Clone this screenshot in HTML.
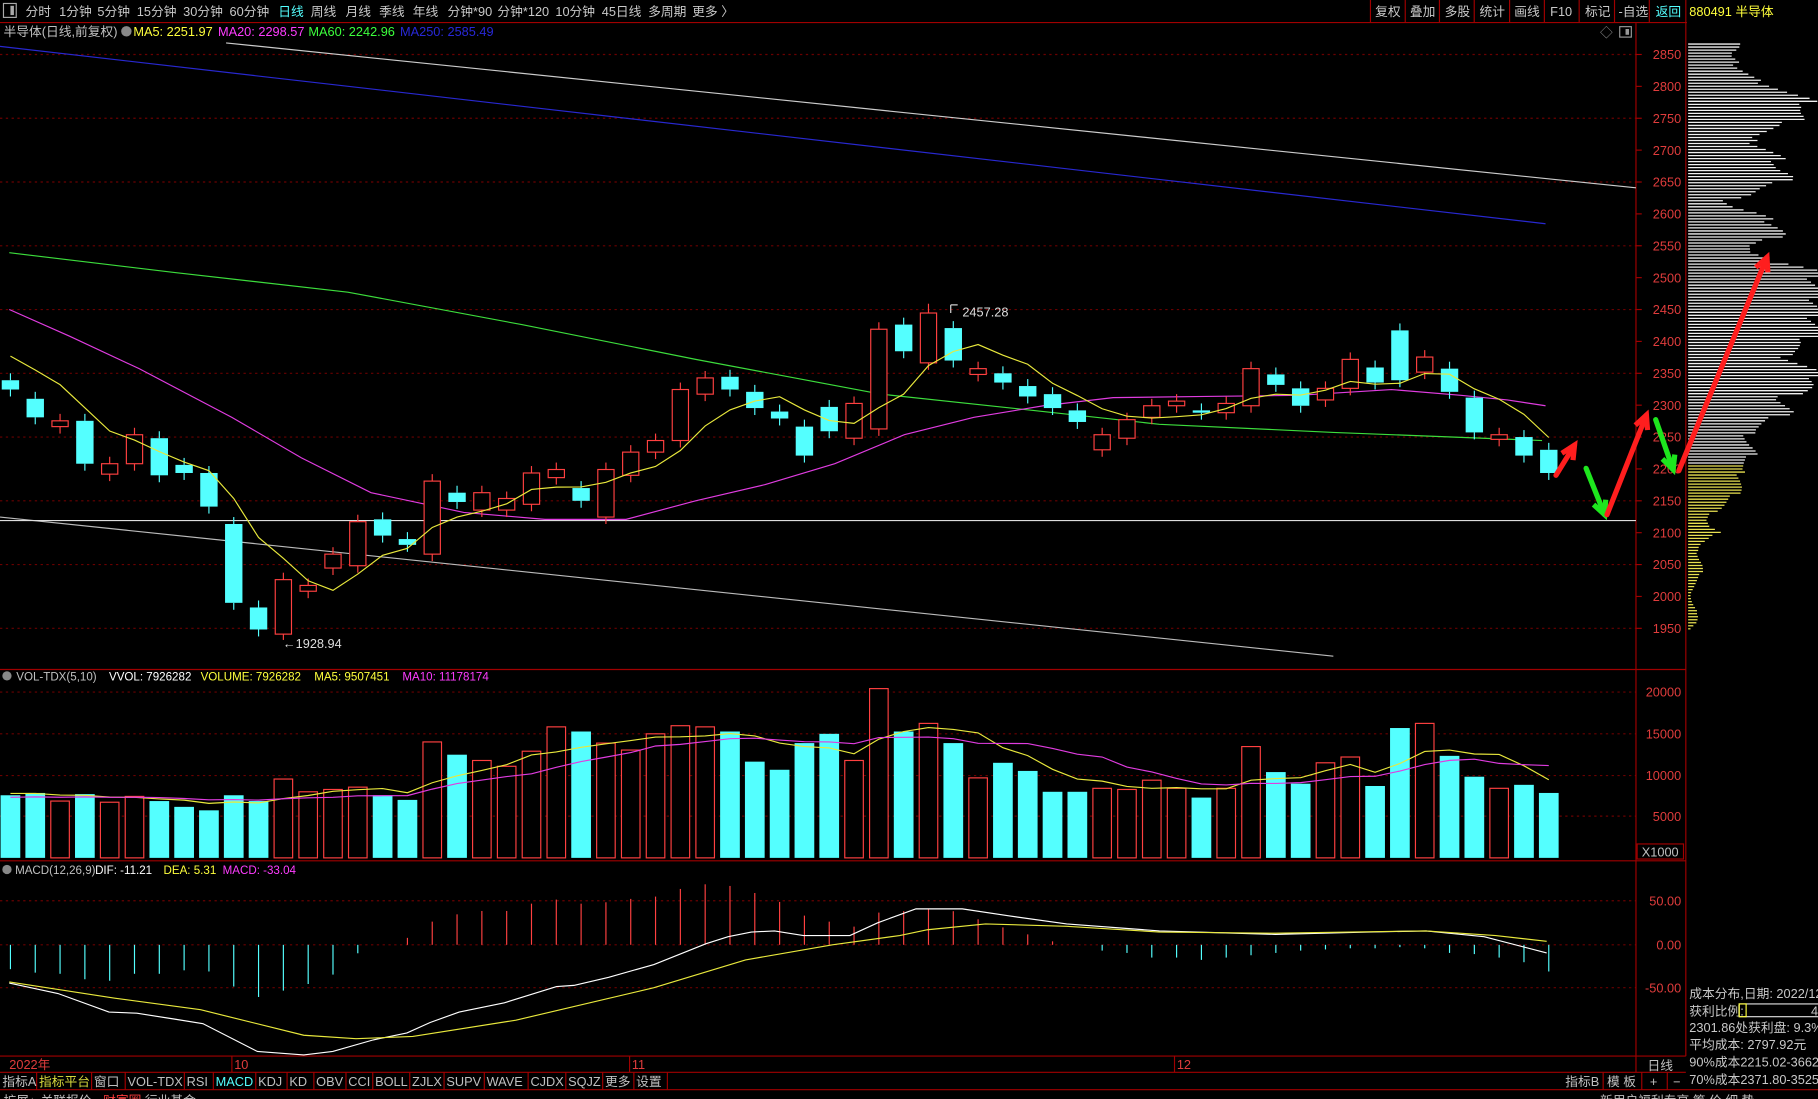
<!DOCTYPE html>
<html><head><meta charset="utf-8">
<style>
html,body{margin:0;padding:0;background:#000;overflow:hidden;width:1818px;height:1099px}
svg{display:block}
text{font-family:"Liberation Sans","Noto Sans CJK SC",sans-serif;font-size:11px}
.h text{font-size:10px}
</style></head>
<body>
<svg id="s" xmlns="http://www.w3.org/2000/svg" width="1818" height="1099" viewBox="0 0 1568 948" preserveAspectRatio="none">
<rect width="1568" height="948" fill="#000"/>
<g id="grid"></g>
<rect x="3" y="3" width="11" height="12" fill="none" stroke="#aaa" stroke-width="1"/>
<rect x="9" y="5" width="3" height="8" fill="#aaa"/>
<g fill="#c8c8c8">
<text x="22" y="14">分时</text><text x="51" y="14">1分钟</text><text x="84" y="14">5分钟</text><text x="118" y="14">15分钟</text><text x="158" y="14">30分钟</text><text x="198" y="14">60分钟</text>
<text x="240" y="14" fill="#54ffff">日线</text><text x="268" y="14">周线</text><text x="298" y="14">月线</text><text x="327" y="14">季线</text><text x="356" y="14">年线</text><text x="386" y="14">分钟*90</text><text x="429" y="14">分钟*120</text><text x="479" y="14">10分钟</text><text x="519" y="14">45日线</text><text x="559" y="14">多周期</text><text x="597" y="14">更多 〉</text>
<text x="1186" y="14">复权</text><text x="1216" y="14">叠加</text><text x="1246" y="14">多股</text><text x="1276" y="14">统计</text><text x="1306" y="14">画线</text><text x="1337" y="14">F10</text><text x="1367" y="14">标记</text><text x="1396" y="14">-自选</text>
<text x="1428" y="14" fill="#54ffff">返回</text>
</g>
<text x="1457" y="14" fill="#ffff3c">880491 半导体</text>
<g stroke="#a00000" stroke-width="1">
<line x1="0" y1="19.5" x2="1455" y2="19.5"/>
<line x1="1182" y1="0" x2="1182" y2="19"/><line x1="1212" y1="0" x2="1212" y2="19"/><line x1="1241.5" y1="0" x2="1241.5" y2="19"/><line x1="1271.5" y1="0" x2="1271.5" y2="19"/><line x1="1302" y1="0" x2="1302" y2="19"/><line x1="1332" y1="0" x2="1332" y2="19"/><line x1="1362" y1="0" x2="1362" y2="19"/><line x1="1392.5" y1="0" x2="1392.5" y2="19"/><line x1="1422.5" y1="0" x2="1422.5" y2="19"/>
<line x1="1411" y1="20" x2="1411" y2="925"/><line x1="1454" y1="0" x2="1454" y2="911"/>
<line x1="0" y1="577.5" x2="1454" y2="577.5"/><line x1="0" y1="742.5" x2="1454" y2="742.5"/><line x1="0" y1="911" x2="1454" y2="911"/>
<line x1="0" y1="925" x2="1454" y2="925"/><line x1="0" y1="940" x2="1568" y2="940"/>
<line x1="1382.7" y1="925" x2="1382.7" y2="940"/><line x1="1416" y1="925" x2="1416" y2="940"/><line x1="1438" y1="925" x2="1438" y2="940"/>
</g>
<text x="3" y="31" fill="#c0c0c0">半导体(日线,前复权)</text>
<circle cx="109" cy="27" r="4.5" fill="#888"/>
<text x="115" y="31" fill="#ffff3c">MA5: 2251.97</text>
<text x="188" y="31" fill="#ff3cff">MA20: 2298.57</text>
<text x="266" y="31" fill="#3cff3c">MA60: 2242.96</text>
<text x="345" y="31" fill="#2828d8">MA250: 2585.49</text>
<text x="1380" y="32" fill="#888" font-size="13">◇</text>
<rect x="1397" y="23" width="10" height="9" fill="none" stroke="#999"/><rect x="1402" y="25" width="3" height="5" fill="#999"/>
<g id="axis" fill="#e03c3c" text-anchor="end"></g>
<g id="chart"></g>
<text x="830" y="273" fill="#ddd">2457.28</text>
<text x="244" y="559" fill="#ddd">←1928.94</text>
<g class="h">
<circle cx="6" cy="583" r="4" fill="#888"/>
<text x="14" y="587" fill="#c0c0c0">VOL-TDX(5,10)</text>
<text x="94" y="587" fill="#fff">VVOL: 7926282</text>
<text x="173" y="587" fill="#ffff3c">VOLUME: 7926282</text>
<text x="271" y="587" fill="#ffff3c">MA5: 9507451</text>
<text x="347" y="587" fill="#ff3cff">MA10: 11178174</text>
<circle cx="6" cy="750" r="4" fill="#888"/>
<text x="13" y="754" fill="#c0c0c0">MACD(12,26,9)</text>
<text x="82" y="754" fill="#fff">DIF: -11.21</text>
<text x="141" y="754" fill="#ffff3c">DEA: 5.31</text>
<text x="192" y="754" fill="#ff3cff">MACD: -33.04</text>
</g>
<g fill="#e03c3c" text-anchor="end">
<text x="1450" y="601">20000</text><text x="1450" y="637">15000</text><text x="1450" y="673">10000</text><text x="1450" y="708">5000</text>
<text x="1450" y="781">50.00</text><text x="1450" y="819">0.00</text><text x="1450" y="856">-50.00</text>
</g>
<rect x="1412" y="728" width="40" height="13" fill="#000" stroke="#a00000"/>
<text x="1416" y="739" fill="#c0c0c0">X1000</text>
<g fill="#e03c3c"><text x="8" y="922">2022年</text><text x="202" y="922">10</text><text x="545" y="922">11</text><text x="1015" y="922">12</text></g>
<g stroke="#a00000"><line x1="200" y1="911" x2="200" y2="925"/><line x1="543" y1="911" x2="543" y2="925"/><line x1="1013" y1="911" x2="1013" y2="925"/></g>
<text x="1421" y="923" fill="#c0c0c0">日线</text>
<g id="tabs"></g>
<text x="1350" y="937" fill="#c0c0c0">指标B</text><text x="1386" y="937" fill="#c0c0c0">模 板</text><text x="1423" y="937" fill="#c0c0c0">+</text><text x="1443" y="937" fill="#c0c0c0">−</text>
<g fill="#c0c0c0"><text x="3" y="953">扩展↓</text><text x="35" y="953">关联报价</text><text x="89" y="953" fill="#ff3c3c">财富圈</text><text x="125" y="953">行业基金</text><text x="1380" y="953">新用户福利专享</text><text x="1460" y="953">筹  价  细  势</text></g>
<g fill="#c8c8c8">
<text x="1457" y="861">成本分布,日期: 2022/12</text>
<text x="1457" y="876">获利比例:</text>
<text x="1457" y="890">2301.86处获利盘: 9.3%</text>
<text x="1457" y="905">平均成本: 2797.92元</text>
<text x="1457" y="920">90%成本2215.02-3662</text>
<text x="1457" y="935">70%成本2371.80-3525</text>
</g>
<rect x="1500" y="866" width="70" height="11" fill="none" stroke="#ddd"/>
<rect x="1500" y="866" width="6" height="11" fill="none" stroke="#ffff3c"/>
<text x="1562" y="876" fill="#c8c8c8">4</text>
</svg>
<script>
const NS="http://www.w3.org/2000/svg";
function el(p,t,a){const e=document.createElementNS(NS,t);for(const k in a)e.setAttribute(k,a[k]);p.appendChild(e);return e;}
const G=document.getElementById('grid'),CH=document.getElementById('chart'),AX=document.getElementById('axis');
const py=p=>47+(2850-p)*0.55;
for(let p=1950;p<=2850;p+=50){const y=py(p);
 if(p%100==50) el(G,'line',{x1:0,y1:y,x2:1411,y2:y,stroke:'#6a0000','stroke-dasharray':'2,3'});
 el(G,'line',{x1:1411,y1:y,x2:1416,y2:y,stroke:'#a00000'});
 const t=el(AX,'text',{x:1450,y:y+4});t.textContent=p;}
[597,633,669,704,777,815,852].forEach(y=>el(G,'line',{x1:0,y1:y,x2:1411,y2:y,stroke:'#6a0000','stroke-dasharray':'2,3'}));
el(CH,'line',{x1:195,y1:37,x2:1411,y2:162,stroke:'#ccc'});
el(CH,'line',{x1:0,y1:40,x2:1333,y2:193,stroke:'#2828d0'});
el(CH,'line',{x1:0,y1:446,x2:1150,y2:566,stroke:'#bbb'});
el(CH,'line',{x1:0,y1:449,x2:1411,y2:449,stroke:'#ddd'});
el(CH,'polyline',{points:'8,218 150,235 300,252 450,280 600,310 760,340 900,355 1000,366 1150,373 1330,380',fill:'none',stroke:'#3cdc3c'});
el(CH,'polyline',{points:'8,267 60,290 120,318 200,360 260,395 320,425 400,442 470,448 540,448 600,432 660,418 720,400 780,375 840,360 900,350 960,343 1040,342 1120,341 1200,336 1260,341 1300,345 1333,350',fill:'none',stroke:'#e03ce0'});
const C=[["c",328,336],["c",344,360],["r",363,368],["c",363,400],["r",400,409],["r",375,400],["c",378,410],["c",401,408],["c",408,437],["c",452,520],["c",524,543],["r",500,547],["r",505,510],["r",478,490],["r",450,488],["c",448,462],["c",465,470],["r",415,478],["c",425,433],["r",425,440],["r",430,440],["r",408,435],["r",405,412],["c",421,432],["r",405,446],["r",390,410],["r",380,390],["r",336,380],["r",326,340],["c",325,336],["c",338,352],["c",355,361],["c",368,393],["c",351,372],["r",348,378],["r",284,370],["c",280,303],["r",270,313],["c",283,311],["r",318,323],["c",322,330],["c",333,342],["c",340,352],["c",354,364],["r",375,388],["r",362,378],["r",350,360],["r",346,350],["c",354,356],["r",348,356],["r",318,350],["c",323,332],["c",335,350],["r",335,345],["r",310,335],["c",317,330],["c",285,328],["r",308,321],["c",318,338],["c",343,373],["r",375,379],["c",377,393],["c",388,408]];
const V=[686,684,691,685,692,687,691,696,699,686,691,672,683,681,679,686,690,640,651,656,661,648,627,631,641,647,633,626,627,631,657,664,641,633,656,594,631,624,641,671,658,665,683,683,680,681,673,680,688,680,644,666,676,658,653,678,628,624,652,670,680,677,684];
const H=[836,839,840,844.7,846,840,840,837,838,851,860,854.5,848.8,840.7,822.3,815,809,795,788.7,785.8,785.8,779.5,776,779.5,778.3,775.4,773.4,766.8,762.8,764.2,770.3,778,789.8,795,799.3,787.2,786,784,786,793,800,806,812,815,820,822,826,826,828,826,824,822,820,819,818,818,817,818,822,823,826,830,838];
const X=i=>9+i*21.4;
const closes=[];
C.forEach((c,i)=>{const x=X(i),[t,top,bot]=c;let hi=top-6,lo=bot+6;
 if(i==11)lo=552; if(i==37)hi=262;
 const col=t=='r'?'#ff4040':'#54ffff';
 el(CH,'line',{x1:x,y1:hi,x2:x,y2:top,stroke:col});el(CH,'line',{x1:x,y1:bot,x2:x,y2:lo,stroke:col});
 if(t=='r')el(CH,'rect',{x:x-7,y:top,width:14,height:Math.max(bot-top,1),fill:'#000',stroke:col});
 else el(CH,'rect',{x:x-7.5,y:top,width:15,height:Math.max(bot-top,1.5),fill:col});
 closes.push(t=='r'?top:bot);
 const v=V[i];
 if(t=='r')el(CH,'rect',{x:x-8,y:v,width:16,height:740-v,fill:'#000',stroke:'#ff4040'});
 else el(CH,'rect',{x:x-8.5,y:v,width:17,height:740-v,fill:'#54ffff'});
 el(CH,'line',{x1:x,y1:815,x2:x,y2:H[i],stroke:H[i]<815?'#ff4040':'#54ffff'});
});
function ma(arr,n,pre){const a=Array(n).fill(pre).concat(arr);return arr.map((_,i)=>{let s=0;for(let k=0;k<n;k++)s+=a[i+n-k];return s/n;});}
el(CH,'polyline',{points:ma(closes,5,300).map((y,i)=>X(i)+','+y).join(' '),fill:'none',stroke:'#e8e83c'});
el(CH,'polyline',{points:ma(V,5,684).map((y,i)=>X(i)+','+y).join(' '),fill:'none',stroke:'#e8e83c'});
el(CH,'polyline',{points:ma(V,10,688).map((y,i)=>X(i)+','+y).join(' '),fill:'none',stroke:'#e03ce0'});
el(CH,'line',{x1:820,y1:270,x2:820,y2:263,stroke:'#ddd'});el(CH,'line',{x1:820,y1:263,x2:826,y2:263,stroke:'#ddd'});
el(CH,'polyline',{points:'8,848 50,857 94,873 118,874 150,879 175,883 222,907 262,910 287,907 322,897 351,891 371,882 396,873 435,865 480,851 495,850 525,843 564,832 609,814 628,808 648,804 668,803 693,807 733,807 757,796 790,784 830,784 870,790 920,797 1000,803 1100,806 1180,804 1230,803 1280,808 1334,822',fill:'none',stroke:'#fff'});
el(CH,'polyline',{points:'8,847 99,861 173,871 262,893 307,896 356,894 445,880 564,852 643,828 718,815 776,807 800,802 850,797 920,799 1000,804 1100,805 1230,803 1290,807 1334,812',fill:'none',stroke:'#e8e83c'});
const P=[[2870,318],[2860,300],[2850,262],[2830,290],[2810,340],[2800,400],[2790,440],[2780,490],[2770,505],[2760,475],[2750,470],[2740,440],[2730,380],[2720,320],[2710,340],[2700,380],[2690,410],[2680,415],[2670,410],[2660,440],[2650,420],[2640,360],[2630,320],[2620,250],[2610,280],[2600,350],[2590,380],[2580,410],[2570,425],[2560,390],[2550,330],[2540,320],[2530,360],[2520,470],[2510,534],[2420,534],[2410,510],[2400,500],[2390,470],[2380,430],[2370,460],[2360,500],[2350,534],[2340,534],[2330,520],[2320,470],[2310,420],[2300,430],[2290,440],[2280,400],[2270,360],[2260,330],[2250,320],[2240,320],[2230,330],[2220,330],[2210,310],[2200,295],[2190,300],[2180,300],[2170,295],[2160,280],[2150,260],[2140,240],[2130,210],[2120,195],[2110,200],[2100,230],[2090,200],[2080,170],[2070,165],[2060,170],[2050,180],[2040,180],[2030,170],[2020,160],[2010,150],[2000,145],[1990,150],[1980,160],[1970,170],[1960,165],[1950,145],[1940,140]];
function len(p){for(let k=0;k<P.length-1;k++){if(p<=P[k][0]&&p>=P[k+1][0]){const f=(P[k][0]-p)/(P[k][0]-P[k+1][0]);return P[k][1]+(P[k+1][1]-P[k][1])*f;}}return 0;}
let j=0;
for(let y=38;y<=545;y+=2.6){const p=2850-(y-47)/0.55;let L=(len(p)-138)*0.2875;L*=0.9+0.2*((j*7919)%13)/13;j++;
 el(CH,'line',{x1:1456,y1:y,x2:Math.min(1456+L,1568),y2:y,stroke:p<2205?'#e8e050':'#f0f0f0','stroke-width':1.1});}
function arrow(x1,y1,x2,y2,c){el(CH,'line',{x1,y1,x2,y2,stroke:c,'stroke-width':4.5,'stroke-linecap':'round'});
 const a=Math.atan2(y2-y1,x2-x1),s=13,w=0.45;
 el(CH,'polyline',{points:`${x2-s*Math.cos(a-w)},${y2-s*Math.sin(a-w)} ${x2},${y2} ${x2-s*Math.cos(a+w)},${y2-s*Math.sin(a+w)}`,fill:'none',stroke:c,'stroke-width':4.5,'stroke-linejoin':'miter'});}
arrow(1342,410,1358,384,'#ff1e1e');
arrow(1368,404,1384,444,'#1ee61e');
arrow(1386,444,1420,358,'#ff1e1e');
arrow(1428,362,1443,405,'#1ee61e');
arrow(1448,406,1524,222,'#ff1e1e');
const T=document.getElementById('tabs');
const tabs=[["指标A",0,31.6,"#c0c0c0"],["指标平台",31.6,79,"#d8d83c"],["窗口",79,108,"#c0c0c0"],["VOL-TDX",108,159,"#c0c0c0"],["RSI",159,184,"#c0c0c0"],["MACD",184,220.6,"#54ffff"],["KDJ",220.6,247.6,"#c0c0c0"],["KD",247.6,270.7,"#c0c0c0"],["OBV",270.7,298.4,"#c0c0c0"],["CCI",298.4,321.5,"#c0c0c0"],["BOLL",321.5,353.4,"#c0c0c0"],["ZJLX",353.4,383,"#c0c0c0"],["SUPV",383,417.7,"#c0c0c0"],["WAVE",417.7,455.5,"#c0c0c0"],["CJDX",455.5,488,"#c0c0c0"],["SQJZ",488,519.8,"#c0c0c0"],["更多",519.8,546.7,"#c0c0c0"],["设置",546.7,575.6,"#c0c0c0"]];
tabs.forEach(t=>{el(T,'line',{x1:t[2],y1:925,x2:t[2],y2:940,stroke:'#a00000'});const e=el(T,'text',{x:t[1]+2,y:937,fill:t[3]});e.textContent=t[0];});
</script>
</body></html>
